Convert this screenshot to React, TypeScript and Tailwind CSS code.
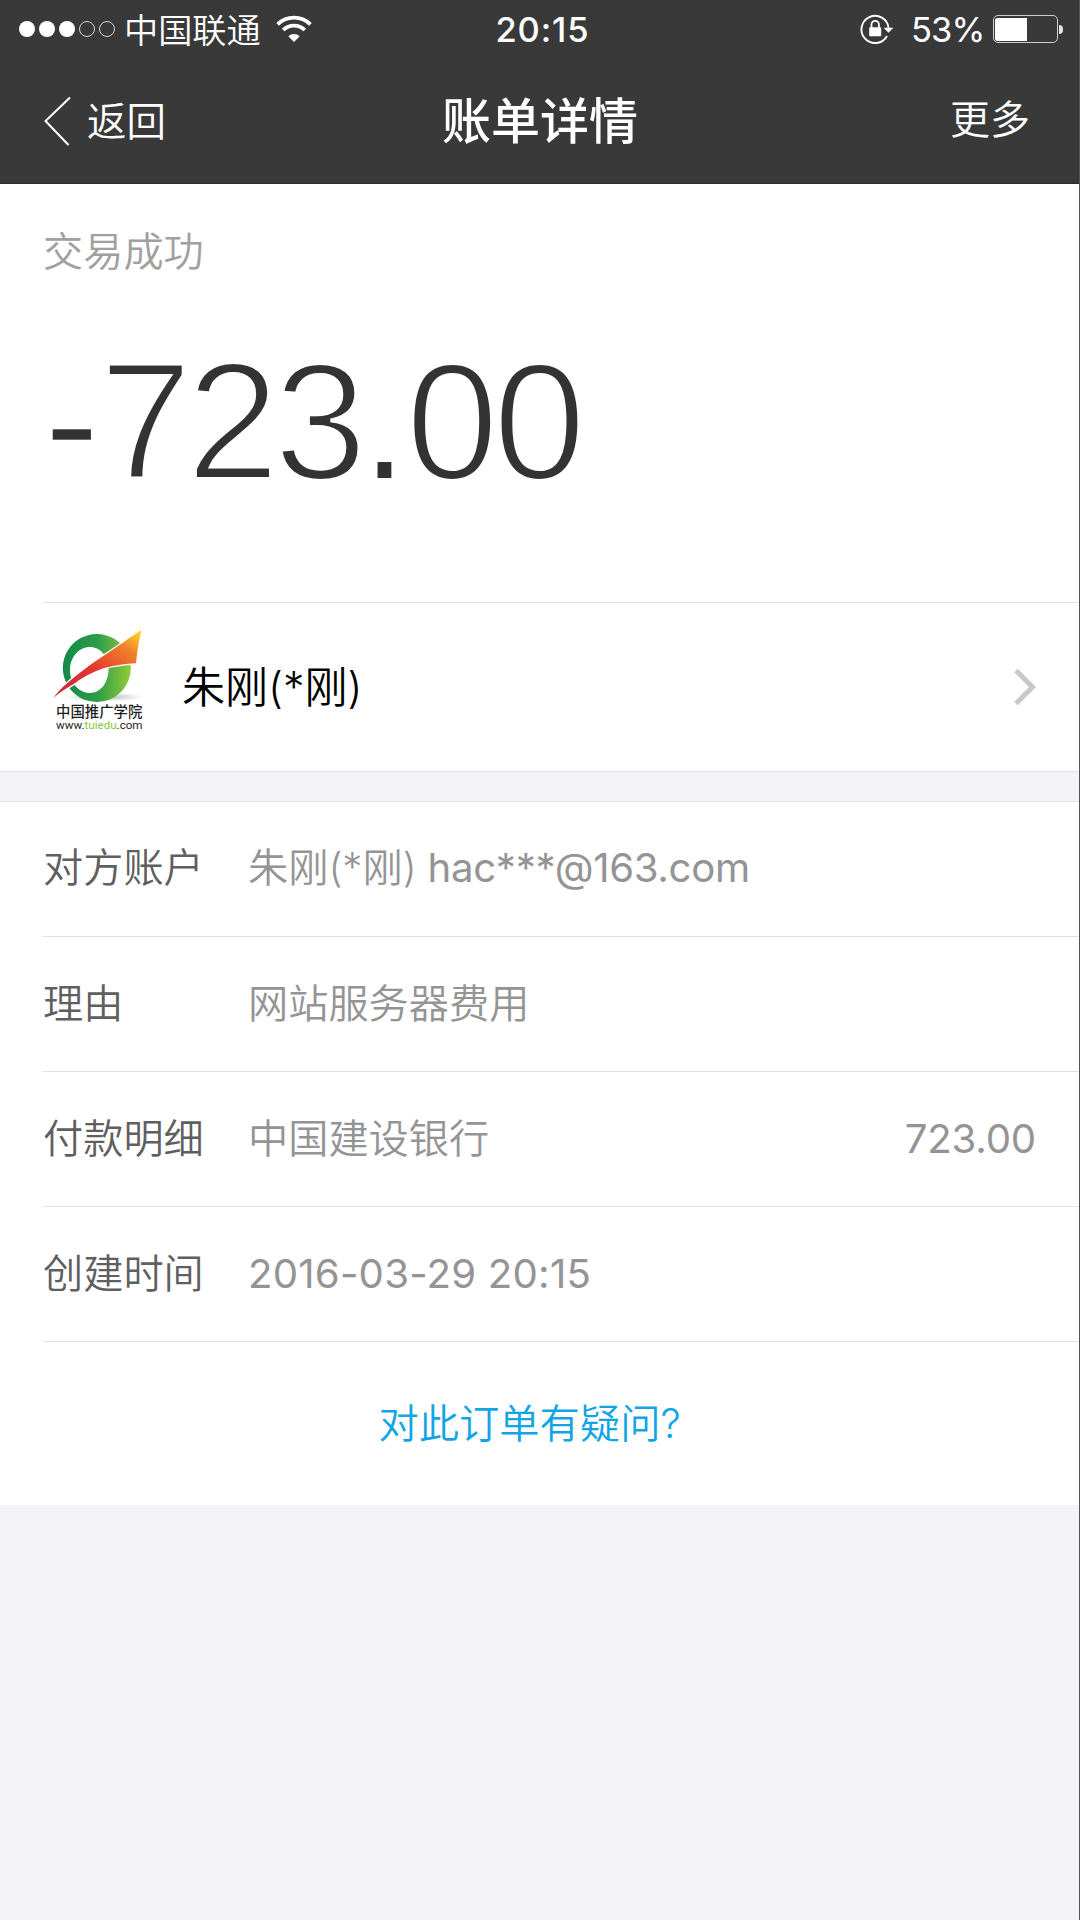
import type { ReactNode } from "react";

function SignalDots() {
  return (
    <div className="flex items-center gap-[4.5px]">
      {[true, true, true, false, false].map((on, i) => (
        <span
          key={i}
          className={
            on
              ? "size-[15.6px] rounded-full bg-white"
              : "size-[15.6px] rounded-full border border-[#d4d4d4]"
          }
        />
      ))}
    </div>
  );
}

function WifiIcon() {
  return (
    <svg width="36" height="28" viewBox="0 0 36 28" fill="none" stroke="#fff" strokeWidth="3.8">
      <path d="M1.6 9.3a23.4 23.4 0 0 1 32.8 0" />
      <path d="M7.2 15a15.4 15.4 0 0 1 21.6 0" />
      <path d="M18 27l-5.7-5.8a8.2 8.2 0 0 1 11.4 0z" fill="#fff" stroke="none" />
    </svg>
  );
}

function RotationLockIcon() {
  return (
    <svg width="34" height="30" viewBox="0 0 34 30" fill="none">
      <path d="M27 22A13.600 13.600 0 1 1 28.600 14" stroke="#fff" strokeWidth="1.9" />
      <path d="M23.600 13.800h9.800l-4.900 5z" fill="#fff" />
      <rect x="9.200" y="13.200" width="12" height="9" rx="0.8" fill="#fff" />
      <path d="M11.500 14v-3.400a3.700 3.700 0 0 1 7.400 0V14" stroke="#fff" strokeWidth="1.8" />
    </svg>
  );
}

function BatteryIcon() {
  return (
    <div className="flex items-center gap-[1.5px]">
      <div className="h-[28px] w-[65px] rounded-[5px] border border-[#cfcfcf] p-[1.5px]">
        <div className="h-full w-[32px] rounded-l-[2.5px] bg-white" />
      </div>
      <div className="h-[9px] w-[4px] rounded-r-full bg-[#e4e4e4]" />
    </div>
  );
}

function Logo() {
  return (
    <div className="relative h-[104px] w-[94px]">
      <svg width="94" height="104" viewBox="0 0 94 104">
        <defs>
          <linearGradient id="ring" x1="0" y1="0" x2="1" y2="0">
            <stop offset="0" stopColor="#118a4a" />
            <stop offset="0.5" stopColor="#2b9c47" />
            <stop offset="1" stopColor="#93cc3b" />
          </linearGradient>
          <linearGradient id="swoosh" x1="0" y1="1" x2="1" y2="0">
            <stop offset="0" stopColor="#c8233a" />
            <stop offset="0.45" stopColor="#e4392f" />
            <stop offset="0.78" stopColor="#f0802a" />
            <stop offset="1" stopColor="#ffe01f" />
          </linearGradient>
          <radialGradient id="shade">
            <stop offset="0" stopColor="#b5b5b5" />
            <stop offset="1" stopColor="#ffffff" />
          </radialGradient>
        </defs>
        <ellipse cx="54" cy="69" rx="40" ry="4.5" fill="url(#shade)" />
        <ellipse cx="41" cy="42" rx="22" ry="23" fill="#fff" />
        <path
          fillRule="evenodd"
          d="M46.800 6a34 34 0 1 0 .01 0zM40 19c10 0 18.500 9 18.500 22S51 65 40 65S20 55 20 42S29 19 40 19z"
          fill="url(#ring)"
        />
        <path
          d="M3.300 70C10 60 25 48 40 37C50 30 58 25 66.700 19C76 12.500 85 6 91.500 2C89 12 87 24 86 35.300C76 36 65 37 53.300 40.300C42 44 32 50 23.300 56.300C16 60.500 9 65 3.300 70z"
          fill="url(#swoosh)"
          stroke="#fff"
          strokeWidth="2.6"
          paintOrder="stroke"
        />
      </svg>
      <div className="absolute top-[77px] left-[6px] text-[14.400px] leading-[14px] font-medium whitespace-nowrap text-[#1f1f1f]">
        中国推广学院
      </div>
      <div className="absolute top-[92px] left-[6px] font-['Roboto'] text-[11.600px] leading-[11px] font-normal whitespace-nowrap text-[#222]">
        www.<span className="text-[#8cc63f]">tuiedu</span>.com
      </div>
    </div>
  );
}

function Row({ label, children }: { label: string; children: ReactNode }) {
  return (
    <div className="ml-[43px] flex h-[135.200px] items-center border-b border-[#e2e2e4] pr-[44px] text-[40.200px] leading-none">
      <div className="w-[205px] shrink-0 text-[#5f5f5f]">{label}</div>
      <div className="flex flex-1 justify-between whitespace-pre text-[#949494]">{children}</div>
    </div>
  );
}

export default function App() {
  return (
    <div className="relative flex h-[1920px] w-[1080px] flex-col overflow-hidden bg-[#f3f3f8] font-['Inter','Noto_Sans_CJK_SC',sans-serif] font-[350]">
      <header className="h-[184px] shrink-0 border-b border-[#2a2a2a] bg-[#393939] text-white">
        <div className="grid h-[58px] grid-cols-3 items-center pr-[17px] pl-[19px]">
          <div className="flex items-center">
            <SignalDots />
            <span className="mt-[4px] ml-[9px] text-[34.200px] leading-none">中国联通</span>
            <span className="ml-[15px]">
              <WifiIcon />
            </span>
          </div>
          <div className="mt-[3px] pl-[3px] text-center text-[34.500px] leading-none font-medium tracking-[0.900px]">20:15</div>
          <div className="flex items-center justify-end">
            <RotationLockIcon />
            <span className="mt-[3px] mr-[8px] ml-[17px] text-[34.500px] leading-none font-[380] tracking-[-0.900px]">53%</span>
            <BatteryIcon />
          </div>
        </div>
        <div className="grid h-[126px] grid-cols-3 items-center pr-[50px] pl-[43px]">
          <div className="flex items-center text-[39.500px] leading-none">
            <svg width="29" height="50" viewBox="0 0 29 50" fill="none" stroke="#fff" strokeWidth="2">
              <path d="M27 1.500L2.500 25L25.500 49" />
            </svg>
            <span className="mt-[4px] ml-[15px]">返回</span>
          </div>
          <h1 className="pt-px pl-[7px] text-center text-[49px] leading-none font-medium">账单详情</h1>
          <div className="-mt-[3px] text-right text-[40px] leading-none">更多</div>
        </div>
      </header>

      <section className="h-[588px] shrink-0 border-b border-[#e2e2e6] bg-white">
        <div className="ml-[43px] h-[419px] border-b border-[#e2e2e4] pt-[48px]">
          <div className="text-[40.200px] leading-[40px] text-[#a0a0a0]">交易成功</div>
          <div className="mt-[66px] ml-px font-['Liberation_Sans'] text-[167px] leading-[167px] font-normal tracking-[-5.500px] text-[#333] [-webkit-text-stroke:4px_white]">
            <span className="tracking-[-0.500px] [-webkit-text-stroke:2.5px_white]">-</span>723
            <span className="tracking-[-2px] [-webkit-text-stroke:2px_white]">.</span>00
          </div>
        </div>
        <div className="flex h-[168px] items-center pr-[43px] pl-[50px]">
          <div className="-mt-[14px]">
            <Logo />
          </div>
          <span className="mt-px ml-[38px] text-[43px] leading-none text-black">朱刚(*刚)</span>
          <svg className="ml-auto" width="24" height="38" viewBox="0 0 24 38" fill="none" stroke="#c7c7cc" strokeWidth="5">
            <path d="M3 2.500L19.500 19L3 35.500" />
          </svg>
        </div>
      </section>

      <section className="mt-[28.500px] h-[704.500px] shrink-0 border-t border-[#e2e2e6] bg-white">
        <Row label="对方账户">
          <span>
            朱刚(*刚)<span className="font-[380] tracking-[-0.350px]"> hac***@163.com</span>
          </span>
        </Row>
        <Row label="理由">网站服务器费用</Row>
        <Row label="付款明细">
          <span>中国建设银行</span>
          <span className="font-[380] tracking-[-0.200px]">723.00</span>
        </Row>
        <Row label="创建时间">
          <span className="font-[380] tracking-[0.200px]">2016-03-29 20:15</span>
        </Row>
        <div className="flex h-[163px] items-center justify-center pr-[21px] text-[40.300px] leading-none text-[#12a5e4]">
          对此订单有疑问?
        </div>
      </section>

      <div className="absolute inset-y-0 right-0 w-px bg-[#555]" />
    </div>
  );
}
